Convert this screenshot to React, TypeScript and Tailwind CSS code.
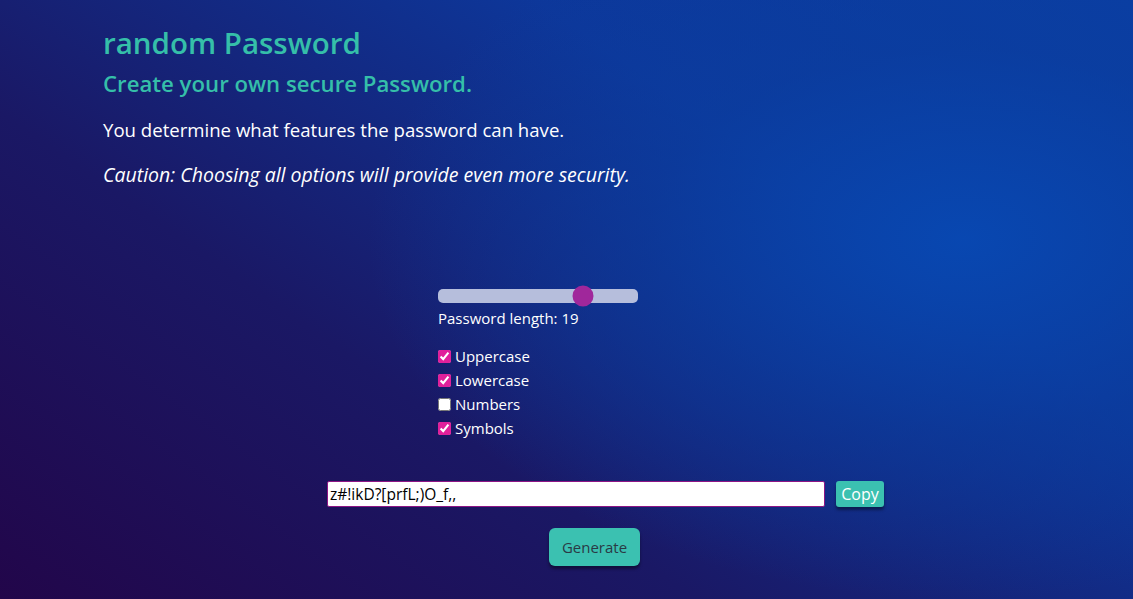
import React, { useState } from "react";

export default function App() {
  const [len] = useState(19);
  const [opts, setOpts] = useState({ Uppercase: true, Lowercase: true, Numbers: false, Symbols: true });
  return (
    <div
      className="w-full h-[599px] overflow-hidden text-white"
      style={{
        fontFamily: '"Open Sans", "Noto Sans", sans-serif',
        background:
          "radial-gradient(ellipse 70% 80% at 85% 40%, rgba(8,72,178,0.95) 0%, rgba(10,62,160,0.6) 40%, rgba(10,60,160,0) 75%), linear-gradient(35deg, #22064a 0%, #1a1865 35%, #0d379a 70%, #0a3ea3 100%)",
      }}
    >
      <div className="pl-[103px] pt-[24px]">
        <h1 className="h-[38px] text-[29.5px] leading-[38px] font-semibold text-[#35bfa9]">random Password</h1>
        <h2 className="mt-[7px] h-[30px] text-[22.2px] leading-[30px] font-semibold text-[#35bfa9]">Create your own secure Password.</h2>
        <p className="mt-[18px] h-[26px] text-[18.6px] leading-[26px]">You determine what features the password can have.</p>
        <p className="mt-[19px] h-[26px] text-[19.5px] leading-[26px] italic">Caution: Choosing all options will provide even more security.</p>
      </div>

      <div className="ml-[438px] mt-[101px] w-[260px]">
        <div className="relative w-[200px] h-[14px] rounded-[5px] bg-[#b6bedc]">
          <div
            className="absolute top-1/2 w-[21px] h-[21px] -translate-x-1/2 -translate-y-1/2 rounded-full bg-[#a0279b]"
            style={{ left: "72.5%" }}
          />
        </div>
        <div className="mt-[5px] h-[20px] text-[15px] leading-[20px]">Password length: {len}</div>
        <div className="mt-[16px] flex flex-col">
          {(Object.keys(opts) as (keyof typeof opts)[]).map((k) => (
            <label key={k} className="flex items-center h-[24px] text-[15px]">
              <input
                type="checkbox"
                checked={opts[k]}
                onChange={() => setOpts({ ...opts, [k]: !opts[k] })}
                className="w-[13px] h-[13px] m-0 accent-[#e0209b]"
              />
              <span className="ml-[4px]">{k}</span>
            </label>
          ))}
        </div>
      </div>

      <div className="ml-[327px] mt-[41px] flex items-center h-[26px]">
        <input
          readOnly
          value="z#!ikD?[prfL;)O_f,,"
          className="w-[498px] h-[26px] bg-white border border-[#8d1585] rounded-[2px] px-[2px] text-[15.5px] text-black outline-none"
        />
        <button className="ml-[11px] w-[48px] h-[26px] rounded-[3px] bg-[#3bc1b1] text-white text-[16px] shadow-[0_3px_3px_rgba(0,0,0,0.4)]">
          Copy
        </button>
      </div>

      <div className="ml-[549px] mt-[21px]">
        <button className="w-[91px] h-[38px] rounded-[6px] bg-[#3bc1b1] text-[#2a3a45] text-[15px] shadow-[0_3px_3px_rgba(0,0,0,0.4)]">
          Generate
        </button>
      </div>
    </div>
  );
}
